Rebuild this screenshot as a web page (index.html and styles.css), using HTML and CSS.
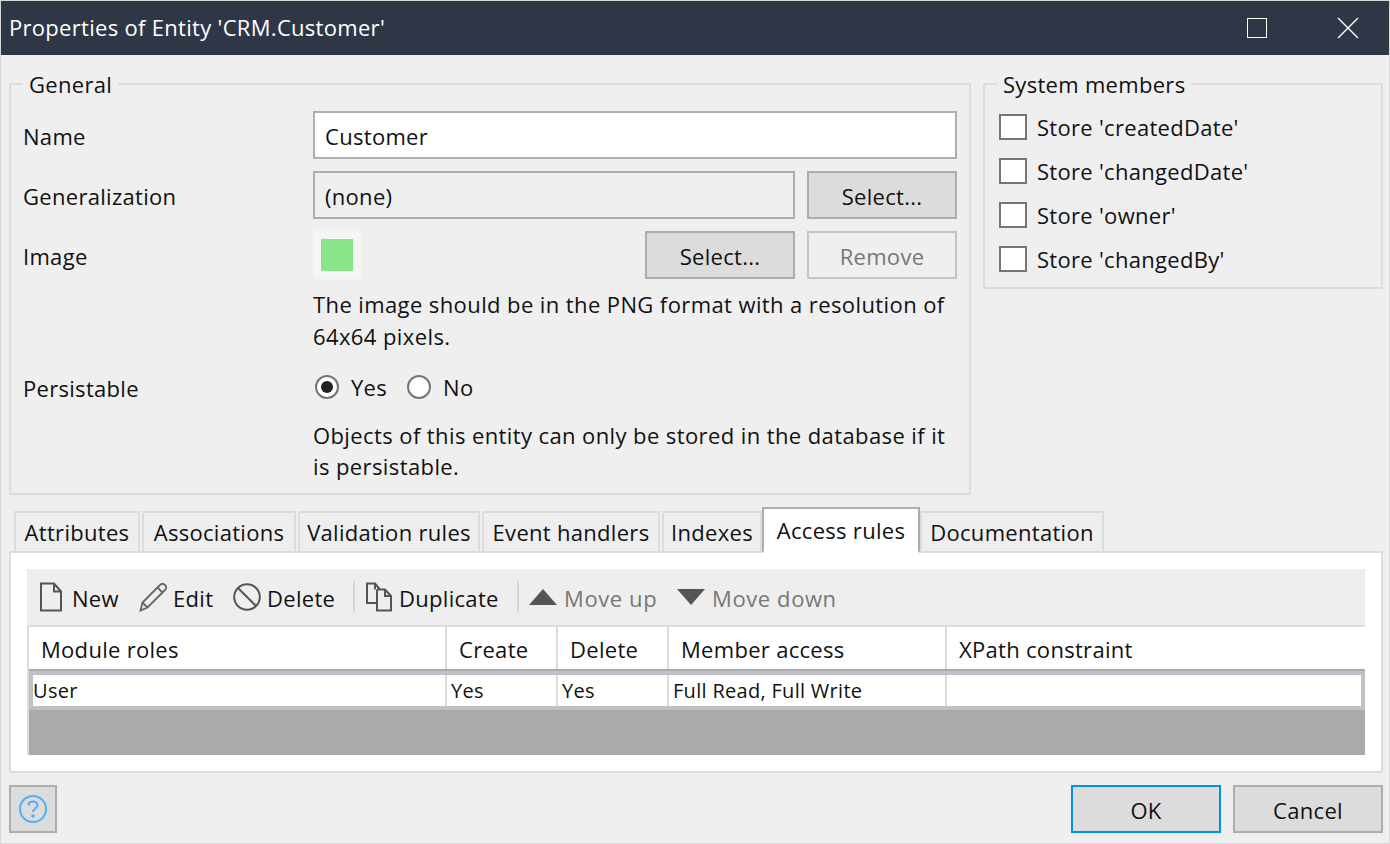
FILE: index.html
```html
<!DOCTYPE html>
<html lang="en">
<head>
<meta charset="utf-8">
<title>Properties of Entity 'CRM.Customer'</title>
<link rel="stylesheet" href="styles.css">
</head>
<body>
<div class="window">
  <header class="titlebar">
    <span class="title">Properties of Entity 'CRM.Customer'</span>
    <div class="winbtns">
      <svg class="maximize" width="20" height="20" viewBox="0 0 20 20"><rect x="0.5" y="0.5" width="19" height="19" fill="none" stroke="#fff"/></svg>
      <svg class="close" width="22" height="22" viewBox="0 0 22 22"><path d="M1 1L21 21M21 1L1 21" stroke="#fff" stroke-width="1.4" fill="none"/></svg>
    </div>
  </header>
  <main class="content">
    <div class="top">
      <fieldset class="group general">
        <legend>General</legend>
        <div class="frow first">
          <label>Name</label>
          <div class="input white">Customer</div>
        </div>
        <div class="frow">
          <label>Generalization</label>
          <div class="ctrl">
            <div class="input grow">(none)</div>
            <button class="btn">Select...</button>
          </div>
        </div>
        <div class="frow">
          <label>Image</label>
          <div class="ctrl">
            <div class="imgbox"><div class="swatch"></div></div>
            <div class="grow"></div>
            <button class="btn">Select...</button>
            <button class="btn disabled">Remove</button>
          </div>
        </div>
        <div class="frow note">
          <span></span>
          <p class="help">The image should be in the PNG format with a resolution of 64x64 pixels.</p>
        </div>
        <div class="frow radiorow">
          <label>Persistable</label>
          <div class="radios">
            <span class="radio on"></span><span class="rlabel">Yes</span>
            <span class="radio"></span><span class="rlabel">No</span>
          </div>
        </div>
        <div class="frow note last">
          <span></span>
          <p class="help">Objects of this entity can only be stored in the database if it is persistable.</p>
        </div>
      </fieldset>
      <fieldset class="group system">
        <legend>System members</legend>
        <div class="check"><span class="box"></span>Store 'createdDate'</div>
        <div class="check"><span class="box"></span>Store 'changedDate'</div>
        <div class="check"><span class="box"></span>Store 'owner'</div>
        <div class="check"><span class="box"></span>Store 'changedBy'</div>
      </fieldset>
    </div>
    <nav class="tabs">
      <div class="tab t1">Attributes</div>
      <div class="tab t2">Associations</div>
      <div class="tab t3">Validation rules</div>
      <div class="tab t4">Event handlers</div>
      <div class="tab t5">Indexes</div>
      <div class="tab t6 active">Access rules</div>
      <div class="tab t7">Documentation</div>
    </nav>
    <section class="panel">
      <div class="toolbar">
        <div class="tool w-new">
          <svg width="24" height="30" viewBox="0 0 24 30"><path d="M1 1.5H14L21 9.5V28.5H1Z M14 1.5V9.5H21" fill="none" stroke="#555" stroke-width="2"/></svg>
          <span>New</span>
        </div>
        <div class="tool w-edit">
          <svg width="28" height="30" viewBox="0 0 28 30"><path d="M1.5 28.5L3.5 20.5L21 3C22.5 1.5 24.5 1.5 26 3C27.5 4.5 27.5 6.5 26 8L8.5 25.5Z M3.5 20.5L8.5 25.5 M18.5 5.5L23.5 10.5" fill="none" stroke="#666" stroke-width="1.8"/></svg>
          <span>Edit</span>
        </div>
        <div class="tool w-delete">
          <svg width="28" height="28" viewBox="0 0 28 28"><circle cx="14" cy="14" r="12.8" fill="none" stroke="#555" stroke-width="2"/><path d="M5 5L23 23" stroke="#555" stroke-width="2"/></svg>
          <span>Delete</span>
        </div>
        <div class="sep"></div>
        <div class="tool w-dup">
          <svg width="26" height="30" viewBox="0 0 26 30"><path d="M11 21H1V1.5H9L14 7.5 M9 1.5V7.5 M11 7.5V28.5H25V14L19 7.5H11 M19 7.5V14H25" fill="none" stroke="#555" stroke-width="2"/></svg>
          <span>Duplicate</span>
        </div>
        <div class="sep"></div>
        <div class="tool w-up off">
          <svg width="28" height="16" viewBox="0 0 28 16"><path d="M14 0L28 16H0Z" fill="#555"/></svg>
          <span>Move up</span>
        </div>
        <div class="tool w-down off">
          <svg width="28" height="16" viewBox="0 0 28 16"><path d="M0 0H28L14 16Z" fill="#555"/></svg>
          <span>Move down</span>
        </div>
      </div>
      <div class="grid">
        <div class="ghead">
          <div class="c1">Module roles</div>
          <div class="c2">Create</div>
          <div class="c3">Delete</div>
          <div class="c4">Member access</div>
          <div class="c5">XPath constraint</div>
        </div>
        <div class="gbody">
          <div class="grow-row">
            <div class="c1">User</div>
            <div class="c2">Yes</div>
            <div class="c3">Yes</div>
            <div class="c4">Full Read, Full Write</div>
            <div class="c5"></div>
          </div>
        </div>
      </div>
    </section>
    <footer class="footer">
      <button class="btn helpbtn">
        <svg width="30" height="30" viewBox="0 0 30 30"><circle cx="15" cy="15" r="13" fill="none" stroke="#4cb1f5" stroke-width="2"/><path d="M10.5 11.5C10.5 8.8 12.5 7.5 15 7.5C17.5 7.5 19.5 9 19.5 11.3C19.5 14.5 15 14.5 15 18" fill="none" stroke="#4cb1f5" stroke-width="2"/><circle cx="15" cy="22" r="1.8" fill="#4cb1f5"/></svg>
      </button>
      <div class="grow"></div>
      <button class="btn default">OK</button>
      <button class="btn">Cancel</button>
    </footer>
  </main>
</div>
</body>
</html>
```
FILE: styles.css
```css
* { box-sizing: border-box; }
html, body { margin: 0; padding: 0; }
body { width: 1390px; height: 844px; overflow: hidden; font-family: "Open Sans", "Noto Sans", sans-serif; font-size: 22px; letter-spacing: 0.3px; color: #111; background: #efefef; }
.window { width: 1390px; height: 844px; border: 1px solid #d8d8d8; display: flex; flex-direction: column; background: #efefef; }
.titlebar { height: 54px; flex: none; background: #2f3747; color: #fff; display: flex; align-items: center; justify-content: space-between; padding: 0 30px 0 8px; font-size: 22px; }
.title { margin-top: -2px; }
.winbtns { display: flex; align-items: center; gap: 70px; }
.content { flex: 1; padding: 13px 6px 0 8px; display: flex; flex-direction: column; }
.top { display: flex; gap: 12px; align-items: flex-start; }
.group { margin: 0; border: 2px solid #dcdcdc; padding: 0 12px; min-width: 0; }
.group legend { padding: 0 6px; line-height: 32px; height: 32px; }
.general { width: 962px; height: 427px; }
.system { width: 400px; height: 221px; }
.frow { display: grid; grid-template-columns: 290px 644px; align-items: center; margin-top: 12px; }
.frow.first { margin-top: 11px; }
.frow label { padding-top: 1px; }
.frow .help { margin: 0; line-height: 32px; letter-spacing: 0.4px; }
.frow.note { margin-top: 9px; }
.frow.note.last { margin-top: 17px; }
.frow.note.last .help { line-height: 31px; }
.radiorow.frow { margin-top: 19px; }
.ctrl { display: flex; gap: 12px; align-items: center; }
.grow { flex: 1; }
.input { height: 48px; border: 2px solid #adadb3; padding: 1px 10px 0; display: flex; align-items: center; }
.input.white { background: #fff; }
.btn { width: 150px; height: 48px; border: 2px solid #adadad; background: #dcdcdc; font: inherit; letter-spacing: inherit; color: #111; padding: 1px 0 0; display: flex; align-items: center; justify-content: center; }
.btn.disabled { background: #efefef; color: #777; border-color: #c4c4c4; }
.btn.default { border-color: #0091ea; }
.imgbox { width: 48px; height: 48px; background: #f5f5f5; padding: 8px; }
.swatch { width: 32px; height: 32px; background: #8ae58a; }
.radios { display: flex; align-items: center; height: 32px; padding-left: 2px; }
.radio { width: 24px; height: 24px; border-radius: 50%; border: 2px solid #757575; background: #fff; position: relative; flex: none; }
.radio.on::after { content: ""; position: absolute; left: 4px; top: 4px; width: 12px; height: 12px; border-radius: 50%; background: #222; }
.rlabel { margin-left: 12px; margin-right: 20px; }
.check { display: flex; align-items: center; height: 32px; margin-bottom: 12px; padding-left: 2px; }
.check:first-of-type { margin-top: 11px; }
.box { width: 28px; height: 26px; border: 2px solid #757575; background: #fff; margin-right: 10px; flex: none; }
.tabs { display: flex; align-items: flex-end; margin-top: 12px; padding-left: 5px; height: 46px; position: relative; z-index: 1; margin-bottom: -2px; }
.tab { height: 42px; background: #eee; border: 2px solid #dcdcdc; margin-right: 2px; display: flex; align-items: center; justify-content: center; flex: none; }
.t1 { width: 126px; }
.t2 { width: 154px; }
.t3 { width: 182px; }
.t4 { width: 178px; }
.t5 { width: 100px; margin-right: 0; }
.t6 { width: 158px; margin-right: 0; }
.t7 { width: 184px; }
.tab.active { height: 46px; background: #fff; border-color: #adadad; border-bottom: 2px solid #fff; }
.panel { height: 222px; flex: none; background: #fff; border: 2px solid #dcdcdc; padding: 16px; display: flex; flex-direction: column; }
.toolbar { height: 56px; flex: none; background: #eee; display: flex; align-items: center; padding-left: 13px; }
.tool { display: flex; align-items: center; flex: none; }
.tool span { margin-left: 8px; padding-top: 2px; }
.w-new { width: 99px; }
.w-edit { width: 94px; }
.w-edit span { margin-left: 6px; }
.w-delete { width: 120px; }
.w-delete span { margin-left: 6px; }
.w-dup { width: 151px; margin-left: 11px; }
.w-dup span { margin-left: 7px; }
.w-up { width: 148px; margin-left: 10px; }
.w-up span { margin-left: 7px; }
.w-down span { margin-left: 7px; }
.tool.off span { color: #777; letter-spacing: 0.6px; }
.sep { width: 2px; height: 32px; background: #d6d6dc; flex: none; }
.grid { flex: 1; display: flex; flex-direction: column; background: #aaa; border-left: 2px solid #dcdcdc; }
.ghead { display: grid; grid-template-columns: 418px 111px 111px 278px 1fr; height: 44px; flex: none; background: #fff; border-top: 2px solid #dcdcdc; }
.ghead > div { display: flex; align-items: center; padding: 2px 0 0 12px; border-right: 2px solid #dcdcdc; }
.ghead > .c5 { border-right: 0; }
.gbody { flex: 1; border-top: 2px solid #aaa; }
.grow-row { display: grid; grid-template-columns: 414px 111px 111px 278px 1fr; background: #fff; border: 4px solid #c0c0c8; font-size: 20px; height: 39px; }
.grow-row > div { display: flex; align-items: center; padding-left: 4px; border-right: 2px solid #dcdcdc; }
.grow-row > .c1 { padding-left: 0; }
.grow-row > .c5 { border-right: 0; }
.footer { display: flex; gap: 12px; margin-top: 12px; }
.footer .grow { flex: 1; }
.helpbtn { width: 48px; padding: 0; }
```
